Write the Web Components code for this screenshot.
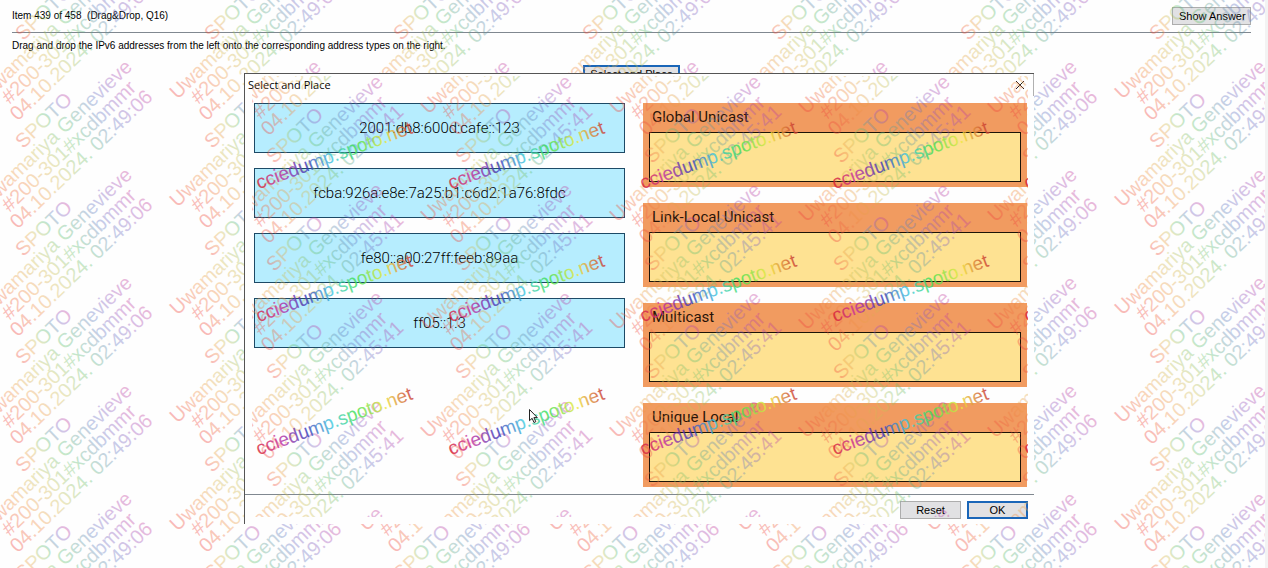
<!DOCTYPE html>
<html lang="en">
<head>
<meta charset="utf-8">
<title>Select and Place</title>
<style>
html, body { height: 100%; }
body { margin: 0; background: #fefefe; color: #000; font: 10px/18px "Liberation Sans", sans-serif; overflow: hidden; }
</style>
</head>
<body>
<exam-page>
  <exam-header slot="header">Item 439 of 458&nbsp; (Drag&amp;Drop, Q16)</exam-header>
  <span slot="question">Drag and drop the IPv6 addresses from the left onto the corresponding address types on the right.</span>
  <push-button slot="action" kind="primary">Select and Place</push-button>
  <place-dialog slot="dialog" heading="Select and Place">
    <address-card slot="source">2001:db8:600d:cafe::123</address-card>
    <address-card slot="source">fcba:926a:e8e:7a25:b1:c6d2:1a76:8fdc</address-card>
    <address-card slot="source">fe80::a00:27ff:feeb:89aa</address-card>
    <address-card slot="source">ff05::1:3</address-card>
    <drop-target slot="target">Global Unicast</drop-target>
    <drop-target slot="target">Link-Local Unicast</drop-target>
    <drop-target slot="target">Multicast</drop-target>
    <drop-target slot="target">Unique Local</drop-target>
    <push-button slot="buttons">Reset</push-button>
    <push-button slot="buttons" kind="primary">OK</push-button>
  </place-dialog>
</exam-page>
<script>
const attach = (el, html) => { el.attachShadow({ mode: "open" }).innerHTML = html; };

/* Repeating rotated rainbow text over whatever box it fills. */
class TextMarks extends HTMLElement {
  constructor() {
    super();
    attach(this, `
      <style>
        :host { display: block; position: absolute; overflow: hidden; pointer-events: none; }
        svg { display: block; width: 100%; height: 100%; }
        text { font-family: "Liberation Sans", sans-serif; text-anchor: middle; dominant-baseline: central; }
        .user { font-size: 20px; fill: url(#soft); opacity: .36; }
        .site { font-size: 19px; fill: url(#strong); opacity: .8; }
      </style>
      <svg aria-hidden="true">
        <defs>
          <linearGradient id="soft">
            <stop offset="0" stop-color="#f03c3c"/><stop offset=".2" stop-color="#f09848"/>
            <stop offset=".36" stop-color="#ccc058"/><stop offset=".55" stop-color="#60c070"/>
            <stop offset=".75" stop-color="#6478c4"/><stop offset=".9" stop-color="#a050b8"/>
            <stop offset="1" stop-color="#c83c98"/>
          </linearGradient>
          <linearGradient id="strong">
            <stop offset="0" stop-color="#d82030"/><stop offset=".14" stop-color="#c830a0"/>
            <stop offset=".32" stop-color="#3838b8"/><stop offset=".48" stop-color="#40c8e0"/>
            <stop offset=".64" stop-color="#40e050"/><stop offset=".82" stop-color="#f0e840"/>
            <stop offset="1" stop-color="#c83030"/>
          </linearGradient>
        </defs>
        <g></g>
      </svg>`);
  }
  connectedCallback() {
    this.draw();
    window.addEventListener("resize", () => this.draw());
  }
  draw() {
    const x0 = +this.getAttribute("x"), y0 = +this.getAttribute("y");
    const lines = ["SPOTO", "Uwamariya Genevieve", "#200-301#xcdbmmr", "04.10.2024. " + this.getAttribute("time")];
    const w = this.clientWidth, h = this.clientHeight;
    let out = "";
    for (let x = x0; x < w + 70; x += 189)
      for (let y = y0; y < h + 64; y += 108)
        out += `<g transform="translate(${x} ${y}) rotate(-44)">` +
          lines.map((t, i) => `<text class="user" y="${(i - 1) * 18}">${t}</text>`).join("") + "</g>";
    if (this.hasAttribute("site"))
      for (let x = 82; x < w + 80; x += 192)
        for (let y = 79; y < h; y += 133)
          out += `<g transform="translate(${x} ${y}) rotate(-20)"><text class="site">${this.getAttribute("site")}</text></g>`;
    this.shadowRoot.querySelector("svg > g").innerHTML = out;
  }
}
customElements.define("text-marks", TextMarks);

customElements.define("push-button", class extends HTMLElement {
  constructor() {
    super();
    attach(this, `
      <style>
        :host { display: block; }
        button { display: block; box-sizing: border-box; width: 100%; height: 18px; padding: 0 6px; border: 1px solid #adadad;
          background: #e1e1e3; color: #000; font: 11px/14px "Liberation Sans", sans-serif; white-space: nowrap; }
        :host([kind=primary]) button { border: 2px solid #1a66b8; padding: 0 5px; }
      </style>
      <button type="button"><slot></slot></button>`);
  }
});

customElements.define("exam-header", class extends HTMLElement {
  constructor() {
    super();
    attach(this, `
      <style>
        :host { display: flex; justify-content: space-between; align-items: center; height: 32px; border-bottom: 1px solid #808890; }
        push-button { width: 79px; }
      </style>
      <span><slot></slot></span>
      <push-button>Show Answer</push-button>`);
  }
});

customElements.define("address-card", class extends HTMLElement {
  constructor() {
    super();
    attach(this, `
      <style>
        :host { display: block; }
        div { box-sizing: border-box; height: 50px; border: 1px solid #1d4a66; background: #b6edfe; color: #000;
          font: 300 15px/48px Roboto, sans-serif; text-align: center; cursor: grab; }
      </style>
      <div draggable="true"><slot></slot></div>`);
  }
});

customElements.define("drop-target", class extends HTMLElement {
  constructor() {
    super();
    attach(this, `
      <style>
        :host { display: block; }
        section { background: #f19b60; padding: 0 6px 5px; }
        h2 { margin: 0; padding: 0 3px; color: #2a1408; font: 400 15px/29px Roboto, sans-serif; }
        div { box-sizing: border-box; height: 50px; border: 1px solid #1c1408; background: #fee292; }
      </style>
      <section><h2><slot></slot></h2><div></div></section>`);
  }
});

customElements.define("place-dialog", class extends HTMLElement {
  constructor() {
    super();
    attach(this, `
      <style>
        :host { display: block; }
        [role=dialog] { position: relative; border: solid #555; border-width: 1px 0 0 1px; background: #fefefe; }
        header { display: flex; justify-content: space-between; align-items: center; height: 22px; padding: 0 8px 0 3px;
          border-right: 1px solid #b0b0b0; font: 11px/22px "Open Sans", sans-serif; color: #000; }
        header button { display: flex; padding: 0; border: 0; background: none; }
        main { display: grid; grid-template-columns: 371fr 384fr; gap: 18px; padding: 7px 7px 7px 9px; }
        .sources { display: grid; gap: 15px; align-content: start; }
        .targets { display: grid; gap: 16px; }
        footer { display: flex; justify-content: flex-end; gap: 6px; padding: 6px 6px 5px; border-top: 1px solid #808890; }
        ::slotted(push-button) { width: 61px; }
        text-marks { inset: 2px 6px 7px 7px; }
        .pointer { position: absolute; left: 284px; top: 335px; pointer-events: none; }
      </style>
      <div role="dialog" aria-labelledby="heading">
        <header>
          <span id="heading"></span>
          <button type="button" aria-label="Close">
            <svg width="10" height="10" viewBox="0 0 10 10"><path d="M1 1l8 8M9 1L1 9" stroke="#222" fill="none"/></svg>
          </button>
        </header>
        <main>
          <div class="sources"><slot name="source"></slot></div>
          <div class="targets"><slot name="target"></slot></div>
        </main>
        <footer><slot name="buttons"></slot></footer>
        <text-marks x="55" y="-36" time="02:45:41" site="cciedump.spoto.net"></text-marks>
        <svg class="pointer" width="10" height="15" viewBox="0 0 10 15"><path d="M.5.5v11.2l2.6-2.4 1.9 4.2 1.8-.8-1.9-4.1h3.4z" fill="#fff" stroke="#222"/></svg>
      </div>`);
  }
  connectedCallback() {
    this.shadowRoot.getElementById("heading").textContent = this.getAttribute("heading");
  }
});

customElements.define("exam-page", class extends HTMLElement {
  constructor() {
    super();
    attach(this, `
      <style>
        :host { display: block; position: relative; box-sizing: border-box; min-height: 100vh; overflow: hidden; border-right: 3px solid #f3f3f3; }
        .page { padding: 0 14px 0 12px; }
        .question { margin: 4px 0 10px; }
        .action { display: flex; justify-content: center; }
        ::slotted(push-button) { width: 97px; }
        text-marks { inset: 0; }
        .over { position: absolute; top: 73px; left: 244px; right: 231px; }
      </style>
      <div class="page">
        <slot name="header"></slot>
        <div class="question"><slot name="question"></slot></div>
        <div class="action"><slot name="action"></slot></div>
      </div>
      <text-marks x="56" y="25" time="02:49:06"></text-marks>
      <div class="over"><slot name="dialog"></slot></div>`);
  }
});
</script>
</body>
</html>
